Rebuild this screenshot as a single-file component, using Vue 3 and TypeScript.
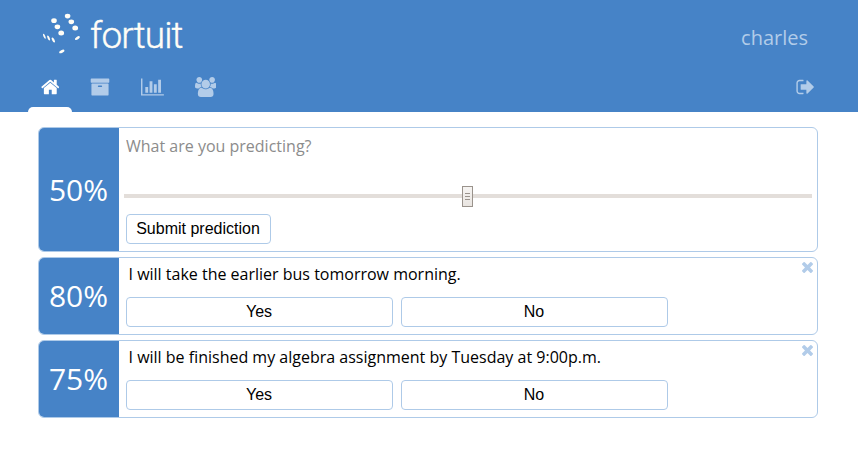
<script setup lang="ts">
import { ref } from 'vue'

interface Icon {
  name: string
  viewBox: string
  width: number
  path: string
}

interface Prediction {
  id: number
  confidence: number
  text: string
}

const icons: Icon[] = [
  {
    name: 'home',
    viewBox: '64 0 1664 1792',
    width: 18.6,
    path: 'M1472 992v480q0 26-19 45t-45 19h-384v-384h-256v384h-384q-26 0-45-19t-19-45v-480q0-1 .5-3t.5-3l575-474 575 474q1 2 1 6zm223-69l-62 74q-8 9-21 11h-3q-13 0-21-7l-692-577-692 577q-12 8-24 7-13-2-21-11l-62-74q-8-10-7-23.5t11-21.5l719-599q32-26 76-26t76 26l244 204v-195q0-14 9-23t23-9h192q14 0 23 9t9 23v408l219 182q10 8 11 21.5t-7 23.5z',
  },
  {
    name: 'archive',
    viewBox: '0 0 1792 1792',
    width: 20,
    path: 'M1088 832q0-26-19-45t-45-19h-256q-26 0-45 19t-19 45 19 45 45 19h256q26 0 45-19t19-45zm576-192v960q0 26-19 45t-45 19h-1408q-26 0-45-19t-19-45v-960q0-26 19-45t45-19h1408q26 0 45 19t19 45zm64-448v256q0 26-19 45t-45 19h-1536q-26 0-45-19t-19-45v-256q0-26 19-45t45-19h1536q26 0 45 19t19 45z',
  },
  {
    name: 'statistics',
    viewBox: '0 0 2048 1792',
    width: 22.9,
    path: 'M640 896v512h-256v-512h256zm384-512v1024h-256v-1024h256zm1024 1152v128h-2048v-1536h128v1408h1920zm-640-896v768h-256v-768h256zm384-384v1152h-256v-1152h256z',
  },
  {
    name: 'groups',
    viewBox: '-64 0 1920 1792',
    width: 21.4,
    path: 'M529 896q-162 5-265 128h-134q-82 0-138-40.5t-56-118.5q0-353 124-353 6 0 43.5 21t97.5 42.5 119 21.5q67 0 133-23-5 37-5 66 0 139 81 256zm1071 637q0 120-73 189.5t-194 69.5h-874q-121 0-194-69.5t-73-189.5q0-53 3.5-103.5t14-109 26.5-108.5 43-97.5 62-81 85.5-53.5 111.5-20q10 0 43 21.5t73 48 107 48 135 21.5 135-21.5 107-48 73-48 43-21.5q61 0 111.5 20t85.5 53.5 62 81 43 97.5 26.5 108.5 14 109 3.5 103.5zm-1024-1277q0 106-75 181t-181 75-181-75-75-181 75-181 181-75 181 75 75 181zm704 384q0 159-112.5 271.5t-271.5 112.5-271.5-112.5-112.5-271.5 112.5-271.5 271.5-112.5 271.5 112.5 112.5 271.5zm576 225q0 78-56 118.5t-138 40.5h-134q-103-123-265-128 81-117 81-256 0-29-5-66 66 23 133 23 59 0 119-21.5t97.5-42.5 43.5-21q124 0 124 353zm-128-609q0 106-75 181t-181 75-181-75-75-181 75-181 181-75 181 75 75 181z',
  },
]

const active = ref('home')
const draft = ref('')
const confidence = ref(50)
const predictions = ref<Prediction[]>([
  { id: 1, confidence: 80, text: 'I will take the earlier bus tomorrow morning.' },
  { id: 2, confidence: 75, text: 'I will be finished my algebra assignment by Tuesday at 9:00p.m.' },
])

function resolve(id: number) {
  predictions.value = predictions.value.filter((p) => p.id !== id)
}

function submit() {
  if (!draft.value) return
  predictions.value.unshift({ id: Date.now(), confidence: confidence.value, text: draft.value })
  draft.value = ''
}
</script>

<template>
  <div class="page">
    <header class="header">
      <div class="brand-row">
        <svg class="logo" width="150" height="46" viewBox="40 10 150 46">
          <g class="dots">
            <ellipse cx="54" cy="20.7" rx="2.8" ry="2.4" />
            <ellipse cx="57.4" cy="26.8" rx="2.8" ry="2.4" />
            <ellipse cx="61.2" cy="33.1" rx="2.9" ry="2.5" />
            <ellipse cx="67.6" cy="16.1" rx="2.8" ry="2.4" />
            <ellipse cx="71.3" cy="21.8" rx="2.8" ry="2.4" />
            <ellipse cx="75.2" cy="27.9" rx="2.9" ry="2.5" />
            <ellipse cx="44.4" cy="36.3" rx="2.7" ry="0.9" transform="rotate(65 44.4 36.3)" />
            <ellipse cx="48.6" cy="38" rx="2.7" ry="1" transform="rotate(65 48.6 38)" />
            <ellipse cx="53.3" cy="40" rx="2.8" ry="1.2" transform="rotate(62 53.3 40)" />
            <ellipse cx="77.4" cy="38.1" rx="2.8" ry="1.4" transform="rotate(-32 77.4 38.1)" />
            <ellipse cx="61.8" cy="51.4" rx="2.9" ry="1.4" transform="rotate(-25 61.8 51.4)" />
          </g>
          <text class="wordmark" x="90" y="48" textLength="93.5" lengthAdjust="spacing">fortuit</text>
        </svg>
        <span class="user">charles</span>
      </div>
      <nav class="nav">
        <a
          v-for="icon in icons"
          :key="icon.name"
          class="tab"
          :class="{ active: active === icon.name }"
          @click="active = icon.name"
        >
          <svg :width="icon.width" height="20" :viewBox="icon.viewBox"><path :d="icon.path" /></svg>
        </a>
        <a class="tab sign-out">
          <svg width="18.6" height="20" viewBox="32 0 1664 1792">
            <path d="M704 1440q0 4 1 20t.5 26.5-3 23.5-10 19.5-20.5 6.5h-320q-119 0-203.5-84.5t-84.5-203.5v-704q0-119 84.5-203.5t203.5-84.5h320q13 0 22.5 9.5t9.5 22.5q0 4 1 20t.5 26.5-3 23.5-10 19.5-20.5 6.5h-320q-66 0-113 47t-47 113v704q0 66 47 113t113 47h312l11.5 1 11.5 3 8 5.5 7 9 2 13.5zm928-544q0 26-19 45l-544 544q-19 19-45 19t-45-19-19-45v-288h-448q-26 0-45-19t-19-45v-384q0-26 19-45t45-19h448v-288q0-26 19-45t45-19 45 19l544 544q19 19 19 45z" />
          </svg>
        </a>
      </nav>
    </header>

    <main class="list">
      <section class="card composer">
        <div class="percent">{{ confidence }}%</div>
        <form class="body" @submit.prevent="submit">
          <input v-model="draft" class="question" type="text" placeholder="What are you predicting?" />
          <input v-model.number="confidence" class="slider" type="range" min="0" max="100" />
          <button class="btn submit" type="submit">Submit prediction</button>
        </form>
      </section>

      <section v-for="p in predictions" :key="p.id" class="card">
        <div class="percent">{{ p.confidence }}%</div>
        <div class="body">
          <div class="title-row">
            <p class="title">{{ p.text }}</p>
            <svg class="close" width="11" height="11" viewBox="302 366 1188 1188" @click="resolve(p.id)">
              <path d="M1490 1322q0 40-28 68l-136 136q-28 28-68 28t-68-28l-294-294-294 294q-28 28-68 28t-68-28l-136-136q-28-28-28-68t28-68l294-294-294-294q-28-28-28-68t28-68l136-136q28-28 68-28t68 28l294 294 294-294q28-28 68-28t68 28l136 136q28 28 28 68t-28 68l-294 294 294 294q28 28 28 68z" />
            </svg>
          </div>
          <div class="answers">
            <button class="btn" type="button" @click="resolve(p.id)">Yes</button>
            <button class="btn" type="button" @click="resolve(p.id)">No</button>
          </div>
        </div>
      </section>
    </main>
  </div>
</template>

<style>
body {
  background: #fff;
}
</style>

<style scoped>
.page {
  font-family: 'Open Sans', sans-serif;
  font-size: 16px;
  color: #000;
}

.header {
  display: flex;
  flex-direction: column;
  justify-content: space-between;
  box-sizing: border-box;
  height: 112px;
  padding-top: 10px;
  background: #4683c7;
  color: #b2cce9;
}

.brand-row {
  display: flex;
  justify-content: space-between;
  padding: 0 50px 0 40px;
}

.dots {
  fill: #fffdf6;
}

.wordmark {
  font-family: Roboto, sans-serif;
  font-weight: 300;
  font-size: 37px;
  fill: #fffdf6;
  stroke: #fffdf6;
  stroke-width: 0.4px;
}

.user {
  padding-top: 14px;
  font-size: 20px;
  line-height: 27px;
}

.nav {
  display: flex;
  gap: 5.6px;
  padding: 0 31px 0 28px;
}

.tab {
  display: flex;
  flex-direction: column;
  align-items: center;
  height: 35px;
  padding: 0 12.7px;
  cursor: pointer;
}

.tab svg {
  display: block;
  fill: currentColor;
}

.tab::after {
  content: '';
  width: calc(100% + 25.4px);
  height: 5px;
  margin: 10px -12.7px 0;
  border-radius: 5px 5px 0 0;
}

.tab.active {
  color: #fff;
}

.tab.active::after {
  background: #fff;
}

.sign-out {
  margin-left: auto;
}

.list {
  display: flex;
  flex-direction: column;
  gap: 5px;
  padding: 15px 40px 0 38px;
}

.card {
  display: flex;
  box-sizing: border-box;
  height: 78px;
  border: 1px solid #aecae8;
  border-radius: 6px;
  overflow: hidden;
}

.composer {
  height: 125px;
}

.percent {
  display: flex;
  flex: 0 0 80px;
  align-items: center;
  justify-content: center;
  box-sizing: border-box;
  padding: 0 1px 1px 0;
  background: #4683c7;
  color: #fff;
  font-size: 30px;
}

.body {
  display: flex;
  flex: 1;
  flex-direction: column;
  min-width: 0;
  padding: 4px 4px 0 7px;
}

.question {
  height: 28px;
  padding: 0;
  border: 0;
  outline: 0;
  background: none;
  font: 400 16px 'Open Sans', sans-serif;
}

.question::placeholder {
  color: #8c8c8c;
}

.slider {
  -webkit-appearance: none;
  appearance: none;
  width: 688px;
  height: 21px;
  margin: 26px 0 7px -2px;
  background: linear-gradient(#e3deda, #e3deda) 0 8px / 100% 4px no-repeat;
}

.slider::-webkit-slider-thumb {
  -webkit-appearance: none;
  width: 11px;
  height: 21px;
  margin-left: -1px;
  border: 1px solid #9a938c;
  background:
    linear-gradient(#9a938c, #9a938c) 2px 6px / 5px 1px no-repeat,
    linear-gradient(#9a938c, #9a938c) 2px 9px / 5px 1px no-repeat,
    linear-gradient(#9a938c, #9a938c) 2px 12px / 5px 1px no-repeat,
    linear-gradient(#f6f4f2, #e9e5e1);
}

.btn {
  box-sizing: border-box;
  width: 267px;
  height: 30px;
  padding: 0 1px 1px 0;
  border: 1px solid #aecae8;
  border-radius: 4px;
  background: #fff;
  color: #000;
  font: 16px 'Liberation Sans', Arial, sans-serif;
}

.submit {
  width: 145px;
}

.title-row {
  display: flex;
  justify-content: space-between;
  height: 35px;
}

.title {
  margin: 0 0 0 2.5px;
  line-height: 24px;
}

.close {
  fill: #b2cce9;
  cursor: pointer;
}

.answers {
  display: flex;
  gap: 8px;
}
</style>
